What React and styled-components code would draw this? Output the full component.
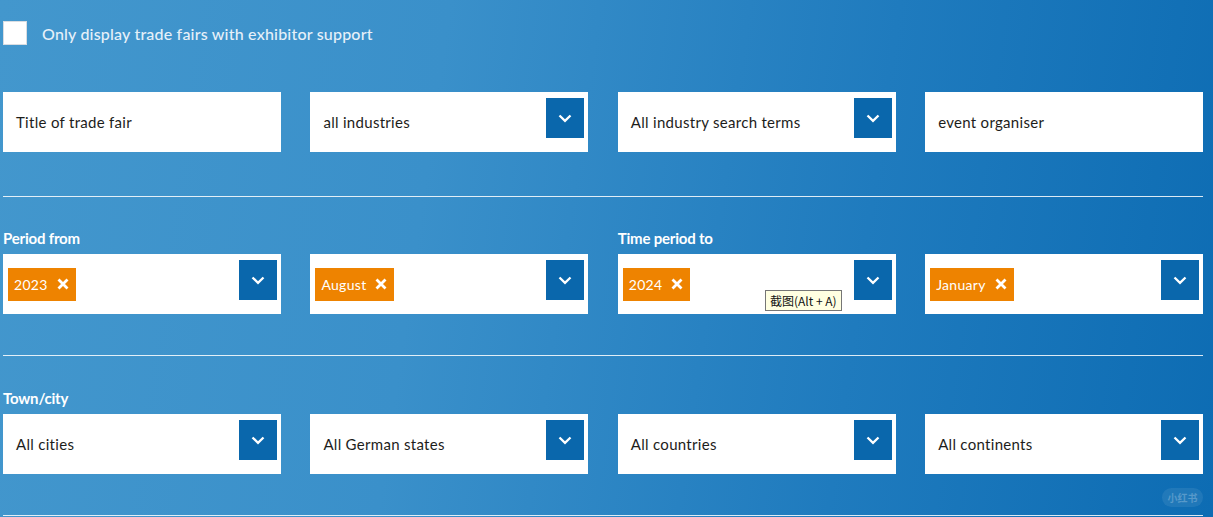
import React from 'react';
import styled, { createGlobalStyle } from 'styled-components';

const GlobalStyle = createGlobalStyle`
  html, body {
    margin: 0;
    padding: 0;
  }
  body {
    font-family: Lato, "Noto Sans", sans-serif;
    background: #2f88c6;
    overflow: hidden;
  }
`

const Page = styled.div`
  position: relative;
  width: 1213px;
  height: 517px;
  overflow: hidden;
  background: linear-gradient(98deg, #4397cd 0%, #3a90ca 35%, #1f7bbe 70%, #0d6cb3 100%);
  padding: 21px 10px 0 3px;
  box-sizing: border-box;
`

const CheckRow = styled.label`
  display: flex;
  align-items: center;
  gap: 15px;
  height: 24px;
  color: #e6f0f9;
  font-size: 16px;
  font-weight: 500;
  letter-spacing: 0.2px;
`

const CheckBox = styled.span`
  width: 24px;
  height: 24px;
  box-sizing: border-box;
  background: #fff;
  border: 1px solid #d9dde2;
`

const Grid = styled.div`
  display: grid;
  width: 1200px;
  grid-template-columns: repeat(4, 1fr);
  column-gap: 29.5px;
  margin-top: ${p => p.$top || 0}px;
`

const Divider = styled.hr`
  margin: ${p => p.$top}px 0 0 0;
  width: 1200px;
  border: none;
  border-top: 1px solid rgba(255, 255, 255, 0.85);
  height: 0;
`

const Section = styled.div`
  padding-top: ${p => p.$top || 31}px;
`

const Label = styled.div`
  color: #fff;
  font-weight: 700;
  font-size: 15px;
  line-height: 20px;
  height: 20px;
  margin-bottom: 6px;
  letter-spacing: -0.2px;
`

const Field = styled.div`
  height: 60px;
  background: #fff;
  display: flex;
  padding: 6px 4px 0 ${p => (p.$tag ? 5 : 13)}px;
  box-sizing: border-box;
  color: #1d1d1b;
  font-size: 15px;
  letter-spacing: 0.3px;
`

const Value = styled.span`
  flex: 1;
  align-self: center;
  display: flex;
  margin-top: -6px;
`

const DropButton = styled.span`
  flex: none;
  width: 38px;
  height: 40px;
  background: #0a67ac;
  display: flex;
  align-items: center;
  justify-content: center;
`

const Tag = styled.span`
  display: inline-flex;
  align-items: center;
  gap: 9px;
  height: 33px;
  padding: 0 7px 0 6px;
  background: #ee8300;
  color: #fff;
  font-size: 14px;
  letter-spacing: 0.3px;
`

const Tooltip = styled.div`
  position: absolute;
  left: 765px;
  top: 290px;
  height: 21px;
  padding: 0 4px;
  box-sizing: border-box;
  background: #ffffe1;
  border: 1px solid #767676;
  font-family: "Noto Sans CJK SC", "Liberation Sans", sans-serif;
  font-size: 12px;
  line-height: 19px;
  color: #111;
  white-space: nowrap;
`

const Watermark = styled.div`
  position: absolute;
  left: 1162px;
  top: 488px;
  width: 41px;
  height: 19px;
  border-radius: 10px;
  background: rgba(255, 255, 255, 0.08);
  color: rgba(255, 255, 255, 0.25);
  font-family: "Noto Sans CJK SC", sans-serif;
  font-size: 10px;
  font-weight: 700;
  display: flex;
  align-items: center;
  justify-content: center;
`

const Chevron = () => (
  <svg width="14" height="9" viewBox="0 0 14 9">
    <polyline points="1.5,1.5 7,6.8 12.5,1.5" fill="none" stroke="#fff" strokeWidth="2.3" />
  </svg>
)

const Cross = () => (
  <svg width="12" height="12" viewBox="0 0 12 12">
    <path d="M1.5 1.5 L10.5 10.5 M10.5 1.5 L1.5 10.5" stroke="#fff" strokeWidth="2.8" />
  </svg>
)

const Input = ({ text }) => (
  <Field>
    <Value>{text}</Value>
  </Field>
)

const Select = ({ text, tag }) => (
  <Field $tag={!!tag}>
    <Value>{tag ? <Tag>{tag}<Cross /></Tag> : text}</Value>
    <DropButton><Chevron /></DropButton>
  </Field>
)

const App = () => (
  <Page>
    <GlobalStyle />
    <CheckRow>
      <CheckBox />
      Only display trade fairs with exhibitor support
    </CheckRow>

    <Grid $top={47}>
      <Input text="Title of trade fair" />
      <Select text="all industries" />
      <Select text="All industry search terms" />
      <Input text="event organiser" />
    </Grid>

    <Divider $top={44} />

    <Section>
      <Grid>
        <Label>Period from</Label>
        <Label />
        <Label>Time period to</Label>
        <Label />
      </Grid>
      <Grid>
        <Select tag="2023" />
        <Select tag="August" />
        <Select tag="2024" />
        <Select tag="January" />
      </Grid>
    </Section>

    <Divider $top={41} />

    <Section $top={32}>
      <Label>Town/city</Label>
      <Grid>
        <Select text="All cities" />
        <Select text="All German states" />
        <Select text="All countries" />
        <Select text="All continents" />
      </Grid>
    </Section>

    <Divider $top={41} />

    <Tooltip>截图(Alt + A)</Tooltip>
    <Watermark>小红书</Watermark>
  </Page>
)

export default App;
